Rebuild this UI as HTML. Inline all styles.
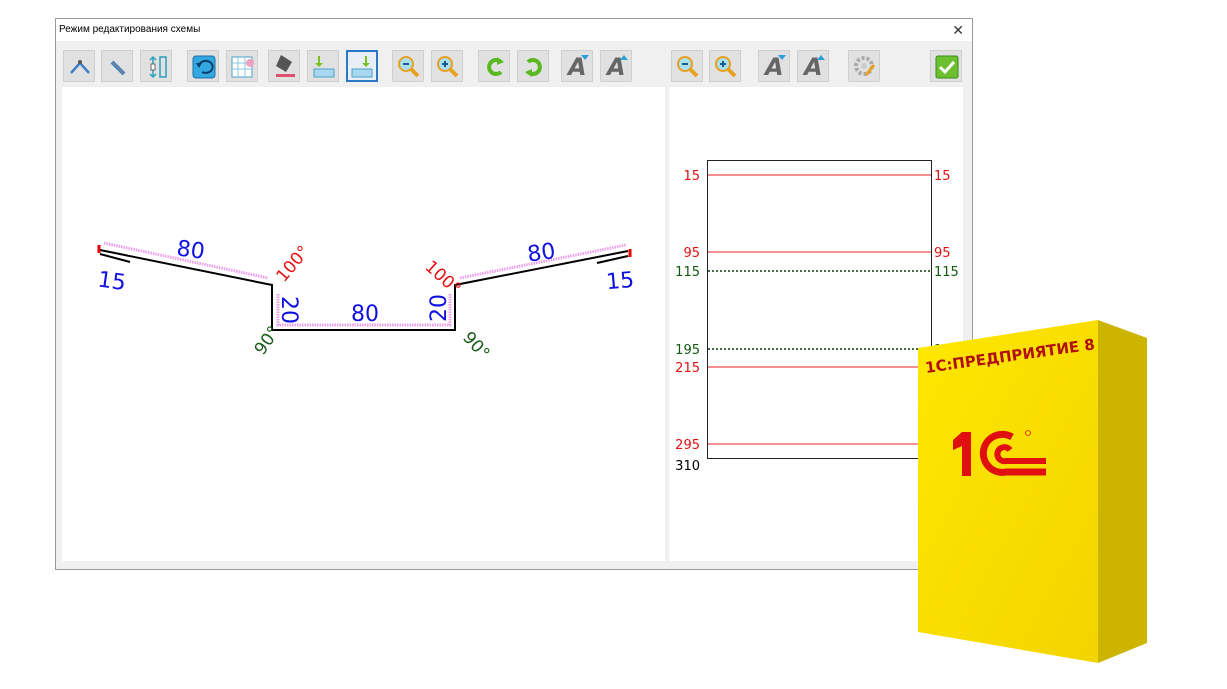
<!DOCTYPE html>
<html><head><meta charset="utf-8"><style>
body{margin:0;width:1227px;height:689px;background:#fff;position:relative;overflow:hidden;font-family:"Liberation Sans","DejaVu Sans",sans-serif}
.win{position:absolute;left:55px;top:18px;width:916px;height:550px;border:1px solid #9a9a9a;background:#f0f0f0}
.title{position:absolute;left:0;top:0;width:916px;height:22px;background:#fff;font-size:10px;line-height:22px;padding-left:3px;box-sizing:border-box;color:#000}
.x{position:absolute;right:8px;top:0;font-size:14px;line-height:22px;color:#333}
.btn{position:absolute;top:50px;width:32px;height:32px;background:#e1e1e1;border:1px solid #cfcfcf;box-sizing:border-box}
.btn.sel{border:2px solid #2a78c8;background:#e8eef6}
.btn svg{position:absolute;left:0;top:0}
.A{position:absolute;font:bold 24px "DejaVu Sans",sans-serif;color:#666;left:6px;top:2px;font-style:italic}
.tri{position:absolute;right:3px;top:4px;width:0;height:0;border-left:4px solid transparent;border-right:4px solid transparent}
</style></head><body>
<div class="win">
<div class="title">Режим редактирования схемы<span class="x">✕</span></div>
</div>
<div style="position:absolute;left:62px;top:87px;width:603px;height:474px;background:#fff"></div>
<div style="position:absolute;left:669px;top:87px;width:294px;height:474px;background:#fff"></div>

<div class="btn" style="left:63px"><svg width="32" height="32"><path d="M7 22 L16 12 L25 22" stroke="#3d7fc0" stroke-width="2.5" fill="none"/><circle cx="16" cy="11" r="2" fill="#555"/></svg></div>
<div class="btn" style="left:101px"><svg width="32" height="32"><path d="M10 11 L22 23" stroke="#3d7fc0" stroke-width="4"/><path d="M10 11 L22 23" stroke="#888" stroke-width="1"/></svg></div>
<div class="btn" style="left:140px"><svg width="32" height="32"><rect x="19" y="6" width="6" height="20" fill="none" stroke="#2aa0c0" stroke-width="1.5"/><path d="M12 6 V26 M9 9 L12 6 L15 9 M9 23 L12 26 L15 23" stroke="#2aa0c0" stroke-width="1.5" fill="none"/><rect x="10" y="13" width="4" height="6" fill="#fff" stroke="#666"/></svg></div>
<div class="btn" style="left:187px"><svg width="32" height="32"><rect x="5" y="5" width="22" height="22" rx="3" fill="#33a8e0" stroke="#1a6fa8"/><path d="M11 14 A7 6 0 1 1 14 21" stroke="#0a3d6a" stroke-width="2" fill="none"/><path d="M8 12 L11 17 L14 12 Z" fill="#0a3d6a"/></svg></div>
<div class="btn" style="left:226px"><svg width="32" height="32"><rect x="5" y="6" width="20" height="20" fill="#fff" stroke="#4aa0c8"/><path d="M5 12H25M5 18H25M11 6V26M18 6V26" stroke="#8cc8e0"/><circle cx="23" cy="12" r="4" fill="#f0a0c0"/></svg></div>
<div class="btn" style="left:268px"><svg width="32" height="32"><path d="M12 4 L23 11 L17 21 L7 15 Z" fill="#555"/><rect x="7" y="23" width="19" height="3" fill="#e05070"/></svg></div>
<div class="btn" style="left:307px"><svg width="32" height="32"><rect x="6" y="18" width="20" height="8" fill="#a8d8f0" stroke="#4aa0c8"/><path d="M10 5 V12 H7 L11 16 L15 12 H12 V5Z" fill="#7cc020"/></svg></div>
<div class="btn sel" style="left:346px"><svg width="32" height="32"><rect x="4" y="17" width="20" height="8" fill="#a8d8f0" stroke="#4aa0c8"/><path d="M17 4 V11 H14 L18 15 L22 11 H19 V4Z" fill="#7cc020"/></svg></div>
<div class="btn" style="left:392px"><svg width="32" height="32"><path d="M18 18 L25 25" stroke="#e8a020" stroke-width="4"/><circle cx="13" cy="13" r="7" fill="#a8e0f0" stroke="#e8a020" stroke-width="2"/><path d="M10 13H16" stroke="#1a5a90" stroke-width="2"/></svg></div>
<div class="btn" style="left:431px"><svg width="32" height="32"><path d="M18 18 L25 25" stroke="#e8a020" stroke-width="4"/><circle cx="13" cy="13" r="7" fill="#a8e0f0" stroke="#e8a020" stroke-width="2"/><path d="M10 13H16M13 10V16" stroke="#1a5a90" stroke-width="2"/></svg></div>
<div class="btn" style="left:478px"><svg width="32" height="32"><path d="M22 11 A7 7 0 1 0 22 21" stroke="#5ab820" stroke-width="4" fill="none"/><path d="M18 6 L25 11 L18 14Z" fill="#5ab820"/></svg></div>
<div class="btn" style="left:517px"><svg width="32" height="32"><path d="M10 11 A7 7 0 1 1 10 21" stroke="#5ab820" stroke-width="4" fill="none"/><path d="M14 18 L7 21 L14 26Z" fill="#5ab820"/></svg></div>
<div class="btn" style="left:561px"><span class="A">A</span><span class="tri" style="border-top:5px solid #2aa0d8"></span></div>
<div class="btn" style="left:600px"><span class="A">A</span><span class="tri" style="border-bottom:5px solid #2aa0d8"></span></div>
<div class="btn" style="left:671px"><svg width="32" height="32"><path d="M18 18 L25 25" stroke="#e8a020" stroke-width="4"/><circle cx="13" cy="13" r="7" fill="#a8e0f0" stroke="#e8a020" stroke-width="2"/><path d="M10 13H16" stroke="#1a5a90" stroke-width="2"/></svg></div>
<div class="btn" style="left:709px"><svg width="32" height="32"><path d="M18 18 L25 25" stroke="#e8a020" stroke-width="4"/><circle cx="13" cy="13" r="7" fill="#a8e0f0" stroke="#e8a020" stroke-width="2"/><path d="M10 13H16M13 10V16" stroke="#1a5a90" stroke-width="2"/></svg></div>
<div class="btn" style="left:758px"><span class="A">A</span><span class="tri" style="border-top:5px solid #2aa0d8"></span></div>
<div class="btn" style="left:797px"><span class="A">A</span><span class="tri" style="border-bottom:5px solid #2aa0d8"></span></div>
<div class="btn" style="left:848px"><svg width="32" height="32"><circle cx="15" cy="15" r="8" fill="none" stroke="#aaa" stroke-width="4" stroke-dasharray="3 2"/><circle cx="15" cy="15" r="3" fill="#ccc"/><path d="M17 24 L25 14" stroke="#e8a020" stroke-width="3"/></svg></div>
<div class="btn" style="left:930px"><svg width="32" height="32"><rect x="5" y="5" width="22" height="22" rx="2" fill="#6cc030" stroke="#3a8a18"/><path d="M9 16 L14 21 L23 11" stroke="#fff" stroke-width="3" fill="none"/></svg></div>

<svg width="1227" height="689" style="position:absolute;left:0;top:0" font-family="DejaVu Sans, Liberation Sans, sans-serif">
<g stroke="#e060e0" stroke-width="3" stroke-dasharray="1.5 1" fill="none" opacity="0.6">
<path d="M104 243 L268 278"/><path d="M278 294 V325 H450 V294"/><path d="M460 278 L626 245"/>
</g>
<g stroke="#000" stroke-width="2" fill="none">
<path d="M100 250 L272 285 V330 H455 V285 L628 251"/>
<path d="M100 254 L130 262"/><path d="M597 263 L628 256"/>
</g>
<path d="M99 245 V253" stroke="#e00" stroke-width="3"/><path d="M630 249 V257" stroke="#e00" stroke-width="3"/>
<g fill="#1010e0" font-size="22">
<text x="177" y="257" transform="rotate(8 190 248)">80</text>
<text x="527" y="260" transform="rotate(-8 540 250)">80</text>
<text x="351" y="321">80</text>
<text x="98" y="288" transform="rotate(8 110 280)">15</text>
<text x="606" y="288" transform="rotate(-5 620 280)">15</text>
<text transform="translate(282,296) rotate(90)">20</text>
<text transform="translate(446,322) rotate(-90)">20</text>
</g>
<g fill="#e81010" font-size="17">
<text transform="translate(284,283) rotate(-50)">100°</text>
<text transform="translate(424,268) rotate(42)">100°</text>
</g>
<g fill="#1a5a1a" font-size="17">
<text transform="translate(263,356) rotate(-55)">90°</text>
<text transform="translate(462,338) rotate(48)">90°</text>
</g>
<rect x="707.5" y="160.5" width="224" height="298" fill="none" stroke="#222"/>
<g stroke="#e82020"><path d="M708 175H931M708 252H931M708 367H931M708 444H931"/></g>
<g stroke="#0a3a0a" stroke-dasharray="2 2" stroke-width="1.5"><path d="M708 271H931M708 349H931"/></g>
<g font-size="13" text-anchor="end">
<text x="700" y="180" fill="#e01010">15</text><text x="700" y="257" fill="#e01010">95</text>
<text x="700" y="276" fill="#105a10">115</text><text x="700" y="354" fill="#105a10">195</text>
<text x="700" y="372" fill="#e01010">215</text><text x="700" y="449" fill="#e01010">295</text>
<text x="700" y="470" fill="#000">310</text>
</g>
<g font-size="13"><text x="934" y="180" fill="#e01010">15</text><text x="934" y="257" fill="#e01010">95</text><text x="934" y="276" fill="#105a10">115</text><text x="934" y="354" fill="#105a10">195</text></g>
<defs><linearGradient id="f" x1="0" y1="0" x2="1" y2="1"><stop offset="0" stop-color="#ffe800"/><stop offset="1" stop-color="#f2d400"/></linearGradient></defs>
<polygon points="1098,320 1147,338 1147,643 1098,663" fill="#cdb400"/>
<polygon points="918,348 1098,320 1098,663 918,632" fill="url(#f)"/>
<text x="926" y="373" font-size="15" font-weight="bold" fill="#b01010" transform="rotate(-8 926 373)">1С:ПРЕДПРИЯТИЕ 8</text>
<g fill="#e01010">
<path d="M953 440 L962 432 H971 V476 H962 V446 L953 450Z"/>
</g>
<g stroke="#e01010" fill="none">
<path d="M1012 437 A19 19 0 1 0 1006 472 H1046" stroke-width="7"/>
<path d="M1010 450 A7 7 0 1 0 1006 461 H1046" stroke-width="6"/>
</g>
<circle cx="1028" cy="433" r="2.5" fill="none" stroke="#e01010" stroke-width="0.8"/>
</svg>
</body></html>
